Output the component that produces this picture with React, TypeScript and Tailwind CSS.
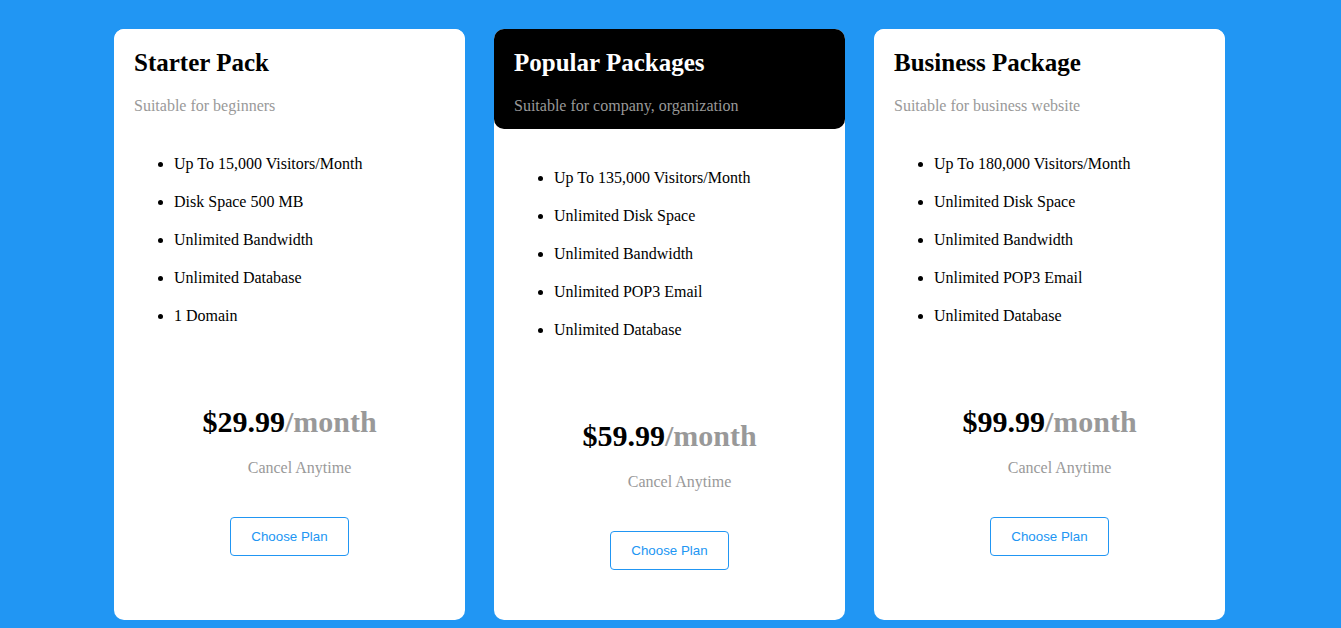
import React from "react";

type Plan = {
  title: string;
  subtitle: string;
  items: string[];
  price: string;
  dark?: boolean;
};

const plans: Plan[] = [
  {
    title: "Starter Pack",
    subtitle: "Suitable for beginners",
    items: [
      "Up To 15,000 Visitors/Month",
      "Disk Space 500 MB",
      "Unlimited Bandwidth",
      "Unlimited Database",
      "1 Domain",
    ],
    price: "$29.99",
  },
  {
    title: "Popular Packages",
    subtitle: "Suitable for company, organization",
    items: [
      "Up To 135,000 Visitors/Month",
      "Unlimited Disk Space",
      "Unlimited Bandwidth",
      "Unlimited POP3 Email",
      "Unlimited Database",
    ],
    price: "$59.99",
    dark: true,
  },
  {
    title: "Business Package",
    subtitle: "Suitable for business website",
    items: [
      "Up To 180,000 Visitors/Month",
      "Unlimited Disk Space",
      "Unlimited Bandwidth",
      "Unlimited POP3 Email",
      "Unlimited Database",
    ],
    price: "$99.99",
  },
];

function Card({ plan }: { plan: Plan }) {
  return (
    <div className="w-[351px] h-[591px] shrink-0 rounded-[10px] bg-white flex flex-col">
      <div
        className={
          plan.dark
            ? "h-[100px] rounded-[10px] bg-black px-[20px] pt-[20px]"
            : "h-[100px] rounded-[10px] bg-white px-[20px] pt-[20px]"
        }
      >
        <h2
          className={
            plan.dark
              ? "text-[25px] leading-[28px] font-bold text-white"
              : "text-[25px] leading-[28px] font-bold text-black"
          }
        >
          {plan.title}
        </h2>
        <p className="mt-[20px] text-[16px] leading-[18px] text-[#999999]">{plan.subtitle}</p>
      </div>
      <div className={plan.dark ? "pt-[40px]" : "pt-[26px]"}>
        <ul className="list-disc pl-[60px] flex flex-col gap-[20px]">
          {plan.items.map((it) => (
            <li key={it} className="text-[16px] leading-[18px] text-black">
              {it}
            </li>
          ))}
        </ul>
        <div className="mt-[80px] flex flex-col items-center">
          <div className="text-[30px] leading-[34px] font-bold">
            <span className="text-black">{plan.price}</span>
            <span className="text-[#999999]">/month</span>
          </div>
          <p className="mt-[20px] pl-[20px] text-[16px] leading-[18px] text-[#999999]">Cancel Anytime</p>
          <button className="mt-[40px] w-[119px] h-[39px] rounded-[4px] border border-[#2196f3] bg-white text-[13.333px] text-[#2196f3] font-['Liberation_Sans',Arial,sans-serif]">
            Choose Plan
          </button>
        </div>
      </div>
    </div>
  );
}

export default function App() {
  return (
    <div className="w-[1341px] h-[628px] bg-[#2196f3] overflow-hidden font-['Liberation_Serif','Times_New_Roman',serif]">
      <div className="flex gap-[29px] pl-[114px] pt-[29px]">
        {plans.map((p) => (
          <Card key={p.title} plan={p} />
        ))}
      </div>
    </div>
  );
}
